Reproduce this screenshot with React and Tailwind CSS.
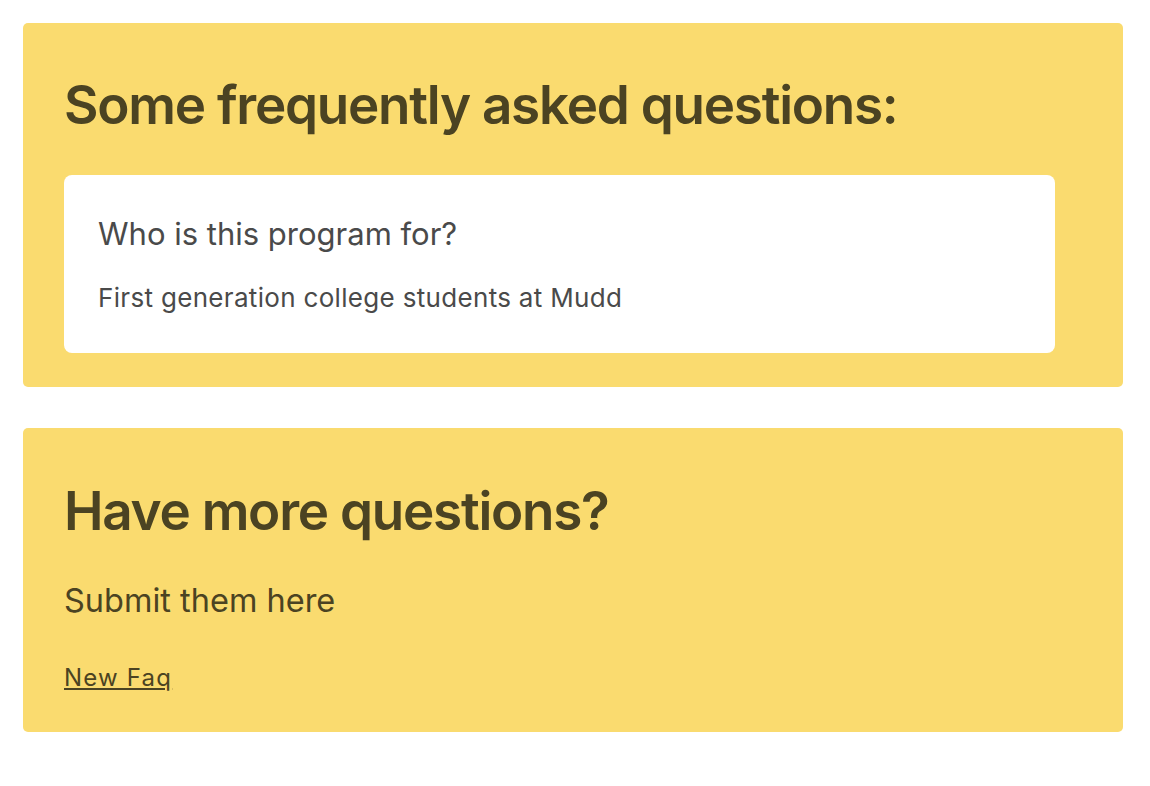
import React from 'react';

const faqs = [
  { question: 'Who is this program for?', answer: 'First generation college students at Mudd' },
];

const FaqItem = ({ question, answer }) => {
  return (
    <div className="w-[991px] bg-white rounded-[8px] px-[34px] pt-[39px] pb-[39px] text-[#4a4a4a]">
      <h3 className="text-[31px] leading-[40px] font-normal">{question}</h3>
      <p className="mt-[28px] text-[26px] leading-[32px] tracking-[0.32px]">{answer}</p>
    </div>
  );
};

export default function App() {
  return (
    <div className="min-h-screen bg-white p-[23px] font-['Inter',sans-serif] text-[#4b4322]">
      <section className="w-[1100px] bg-[#fadb6f] rounded-[5px] px-[41px] pt-[50px] pb-[34px]">
        <h1 className="text-[53px] leading-[64px] font-semibold tracking-[-1.25px]">Some frequently asked questions:</h1>
        <div className="mt-[38px] flex flex-col gap-6">
          {faqs.map((faq, i) => (
            <FaqItem key={i} question={faq.question} answer={faq.answer} />
          ))}
        </div>
      </section>

      <section className="mt-[41px] w-[1100px] bg-[#fadb6f] rounded-[5px] px-[41px] pt-[51px] pb-[39px]">
        <h2 className="text-[53px] leading-[64px] font-semibold tracking-[-1.25px]">Have more questions?</h2>
        <p className="mt-[38px] text-[32.5px] leading-[40px]">Submit them here</p>
        <a href="#" className="mt-[42px] block w-fit text-[24px] leading-[30px] tracking-[1.2px] underline">
          New Faq
        </a>
      </section>
    </div>
  );
}
